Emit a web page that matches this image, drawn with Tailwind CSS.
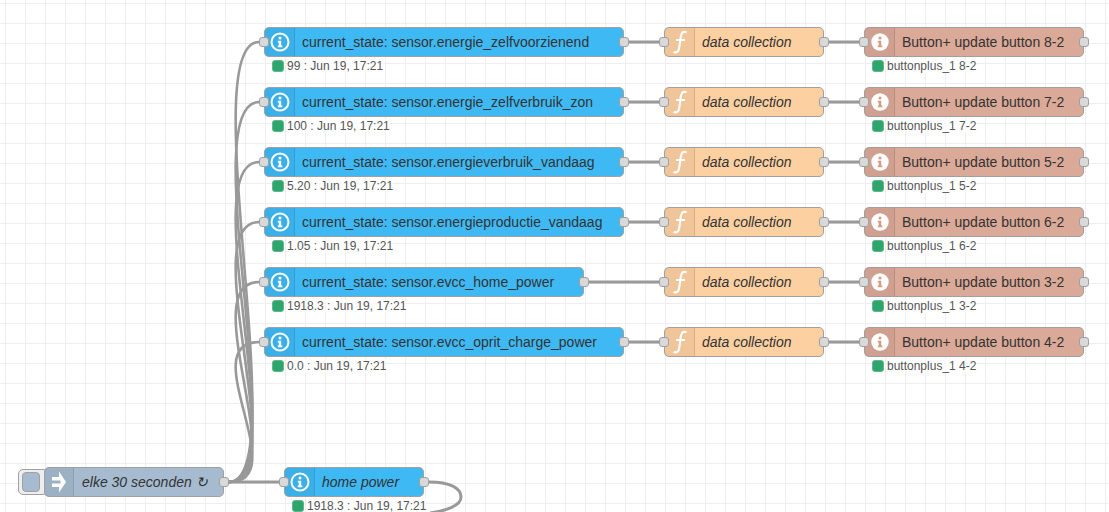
<!DOCTYPE html>
<html>
<head>
<meta charset="utf-8">
<script src="https://cdn.jsdelivr.net/npm/@tailwindcss/browser@4"></script>
</head>
<body class="m-0">
<div class="relative w-[1109px] h-[512px] overflow-hidden bg-white font-['Liberation_Sans',Arial,sans-serif] bg-[linear-gradient(#eeeeee_1px,transparent_1px),linear-gradient(90deg,#eeeeee_1px,transparent_1px)] bg-[size:20px_20px] bg-[position:5px_3px]">

<svg class="absolute inset-0" width="1109" height="512" fill="none" stroke="#999999" stroke-width="3">
  <g stroke-width="2.6">
  <path d="M229 482C295 482 193 42 259 42"/>
  <path d="M229 482C295 482 193 102 259 102"/>
  <path d="M229 482C295 482 193 162 259 162"/>
  <path d="M229 482C295 482 193 222 259 222"/>
  <path d="M229 482C295 482 193 282 259 282"/>
  <path d="M229 482C295 482 193 342 259 342"/>
  </g>
  <path d="M229 482L279 482"/>
  <path d="M429 482C450 482 461 488 461 497C461 506 445 511 430 513"/>
  <path d="M629 42H659M829 42H859M629 102H659M829 102H859M629 162H659M829 162H859M629 222H659M829 222H859M589 282H659M829 282H859M629 342H659M829 342H859"/>
</svg>

<!-- Row 1 -->
<div class="absolute left-[264px] top-[27px] w-[360px] h-[30px] flex items-center rounded-[5px] border border-[#a0a0a0] bg-[#3FB9F4] text-[14px] text-[#333]">
  <div class="w-[30px] h-full shrink-0 flex items-center justify-center bg-black/5 border-r border-black/10"><svg width="20" height="20" viewBox="0 0 20 20"><circle cx="10" cy="10" r="8.5" fill="none" stroke="#fff" stroke-width="2"/><circle cx="10" cy="6" r="1.5" fill="#fff"/><path d="M7.8 8.8h3.4v4.8h1.1v1.6H7.8v-1.6h1v-3.2h-1z" fill="#fff"/></svg></div>
  <span class="pl-[7px] whitespace-nowrap">current_state: sensor.energie_zelfvoorzienend</span>
</div>
<div class="absolute left-[259px] top-[37px] w-[10px] h-[10px] rounded-[3px] bg-[#d9d9d9] border border-[#a0a0a0]"></div>
<div class="absolute left-[619px] top-[37px] w-[10px] h-[10px] rounded-[3px] bg-[#d9d9d9] border border-[#a0a0a0]"></div>
<div class="absolute left-[272px] top-[59px] flex items-center gap-[3px] text-[12px] leading-[14px] text-[#555]"><span class="w-[12px] h-[12px] rounded-[3px] bg-[#2EA56C] border border-[#5cb98c]"></span><span class="bg-white/70 whitespace-nowrap">99 : Jun 19, 17:21</span></div>

<div class="absolute left-[664px] top-[27px] w-[160px] h-[30px] flex items-center rounded-[5px] border border-[#a0a0a0] bg-[#FDD0A2] text-[14px] text-[#333] italic">
  <div class="w-[30px] h-full shrink-0 flex items-center justify-center bg-black/5 border-r border-black/10"><svg width="16" height="26" viewBox="0 0 16 26"><path d="M14.5 3.5C11 1.5 9.3 4 8.8 7.5L7.2 19C6.7 22.5 4.5 24.5 1.5 22.8M4 11h9" fill="none" stroke="#fff" stroke-width="2.1"/></svg></div>
  <span class="pl-[7px] whitespace-nowrap">data collection</span>
</div>
<div class="absolute left-[659px] top-[37px] w-[10px] h-[10px] rounded-[3px] bg-[#d9d9d9] border border-[#a0a0a0]"></div>
<div class="absolute left-[819px] top-[37px] w-[10px] h-[10px] rounded-[3px] bg-[#d9d9d9] border border-[#a0a0a0]"></div>

<div class="absolute left-[864px] top-[27px] w-[220px] h-[30px] flex items-center rounded-[5px] border border-[#a0a0a0] bg-[#DBA997] text-[14px] text-[#333]">
  <div class="w-[30px] h-full shrink-0 flex items-center justify-center bg-black/5 border-r border-black/10"><svg width="20" height="20" viewBox="0 0 20 20"><circle cx="10" cy="10" r="8.7" fill="#fff"/><circle cx="10" cy="6" r="1.5" fill="#D59A84"/><path d="M7.8 8.8h3.4v4.8h1.1v1.6H7.8v-1.6h1v-3.2h-1z" fill="#D59A84"/></svg></div>
  <span class="pl-[7px] whitespace-nowrap">Button+ update button 8-2</span>
</div>
<div class="absolute left-[859px] top-[37px] w-[10px] h-[10px] rounded-[3px] bg-[#d9d9d9] border border-[#a0a0a0]"></div>
<div class="absolute left-[1079px] top-[37px] w-[10px] h-[10px] rounded-[3px] bg-[#d9d9d9] border border-[#a0a0a0]"></div>
<div class="absolute left-[872px] top-[59px] flex items-center gap-[3px] text-[12px] leading-[14px] text-[#555]"><span class="w-[12px] h-[12px] rounded-[3px] bg-[#2EA56C] border border-[#5cb98c]"></span><span class="bg-white/70 whitespace-nowrap">buttonplus_1 8-2</span></div>

<!-- Row 2 -->
<div class="absolute left-[264px] top-[87px] w-[360px] h-[30px] flex items-center rounded-[5px] border border-[#a0a0a0] bg-[#3FB9F4] text-[14px] text-[#333]">
  <div class="w-[30px] h-full shrink-0 flex items-center justify-center bg-black/5 border-r border-black/10"><svg width="20" height="20" viewBox="0 0 20 20"><circle cx="10" cy="10" r="8.5" fill="none" stroke="#fff" stroke-width="2"/><circle cx="10" cy="6" r="1.5" fill="#fff"/><path d="M7.8 8.8h3.4v4.8h1.1v1.6H7.8v-1.6h1v-3.2h-1z" fill="#fff"/></svg></div>
  <span class="pl-[7px] whitespace-nowrap">current_state: sensor.energie_zelfverbruik_zon</span>
</div>
<div class="absolute left-[259px] top-[97px] w-[10px] h-[10px] rounded-[3px] bg-[#d9d9d9] border border-[#a0a0a0]"></div>
<div class="absolute left-[619px] top-[97px] w-[10px] h-[10px] rounded-[3px] bg-[#d9d9d9] border border-[#a0a0a0]"></div>
<div class="absolute left-[272px] top-[119px] flex items-center gap-[3px] text-[12px] leading-[14px] text-[#555]"><span class="w-[12px] h-[12px] rounded-[3px] bg-[#2EA56C] border border-[#5cb98c]"></span><span class="bg-white/70 whitespace-nowrap">100 : Jun 19, 17:21</span></div>

<div class="absolute left-[664px] top-[87px] w-[160px] h-[30px] flex items-center rounded-[5px] border border-[#a0a0a0] bg-[#FDD0A2] text-[14px] text-[#333] italic">
  <div class="w-[30px] h-full shrink-0 flex items-center justify-center bg-black/5 border-r border-black/10"><svg width="16" height="26" viewBox="0 0 16 26"><path d="M14.5 3.5C11 1.5 9.3 4 8.8 7.5L7.2 19C6.7 22.5 4.5 24.5 1.5 22.8M4 11h9" fill="none" stroke="#fff" stroke-width="2.1"/></svg></div>
  <span class="pl-[7px] whitespace-nowrap">data collection</span>
</div>
<div class="absolute left-[659px] top-[97px] w-[10px] h-[10px] rounded-[3px] bg-[#d9d9d9] border border-[#a0a0a0]"></div>
<div class="absolute left-[819px] top-[97px] w-[10px] h-[10px] rounded-[3px] bg-[#d9d9d9] border border-[#a0a0a0]"></div>

<div class="absolute left-[864px] top-[87px] w-[220px] h-[30px] flex items-center rounded-[5px] border border-[#a0a0a0] bg-[#DBA997] text-[14px] text-[#333]">
  <div class="w-[30px] h-full shrink-0 flex items-center justify-center bg-black/5 border-r border-black/10"><svg width="20" height="20" viewBox="0 0 20 20"><circle cx="10" cy="10" r="8.7" fill="#fff"/><circle cx="10" cy="6" r="1.5" fill="#D59A84"/><path d="M7.8 8.8h3.4v4.8h1.1v1.6H7.8v-1.6h1v-3.2h-1z" fill="#D59A84"/></svg></div>
  <span class="pl-[7px] whitespace-nowrap">Button+ update button 7-2</span>
</div>
<div class="absolute left-[859px] top-[97px] w-[10px] h-[10px] rounded-[3px] bg-[#d9d9d9] border border-[#a0a0a0]"></div>
<div class="absolute left-[1079px] top-[97px] w-[10px] h-[10px] rounded-[3px] bg-[#d9d9d9] border border-[#a0a0a0]"></div>
<div class="absolute left-[872px] top-[119px] flex items-center gap-[3px] text-[12px] leading-[14px] text-[#555]"><span class="w-[12px] h-[12px] rounded-[3px] bg-[#2EA56C] border border-[#5cb98c]"></span><span class="bg-white/70 whitespace-nowrap">buttonplus_1 7-2</span></div>

<!-- Row 3 -->
<div class="absolute left-[264px] top-[147px] w-[360px] h-[30px] flex items-center rounded-[5px] border border-[#a0a0a0] bg-[#3FB9F4] text-[14px] text-[#333]">
  <div class="w-[30px] h-full shrink-0 flex items-center justify-center bg-black/5 border-r border-black/10"><svg width="20" height="20" viewBox="0 0 20 20"><circle cx="10" cy="10" r="8.5" fill="none" stroke="#fff" stroke-width="2"/><circle cx="10" cy="6" r="1.5" fill="#fff"/><path d="M7.8 8.8h3.4v4.8h1.1v1.6H7.8v-1.6h1v-3.2h-1z" fill="#fff"/></svg></div>
  <span class="pl-[7px] whitespace-nowrap">current_state: sensor.energieverbruik_vandaag</span>
</div>
<div class="absolute left-[259px] top-[157px] w-[10px] h-[10px] rounded-[3px] bg-[#d9d9d9] border border-[#a0a0a0]"></div>
<div class="absolute left-[619px] top-[157px] w-[10px] h-[10px] rounded-[3px] bg-[#d9d9d9] border border-[#a0a0a0]"></div>
<div class="absolute left-[272px] top-[179px] flex items-center gap-[3px] text-[12px] leading-[14px] text-[#555]"><span class="w-[12px] h-[12px] rounded-[3px] bg-[#2EA56C] border border-[#5cb98c]"></span><span class="bg-white/70 whitespace-nowrap">5.20 : Jun 19, 17:21</span></div>

<div class="absolute left-[664px] top-[147px] w-[160px] h-[30px] flex items-center rounded-[5px] border border-[#a0a0a0] bg-[#FDD0A2] text-[14px] text-[#333] italic">
  <div class="w-[30px] h-full shrink-0 flex items-center justify-center bg-black/5 border-r border-black/10"><svg width="16" height="26" viewBox="0 0 16 26"><path d="M14.5 3.5C11 1.5 9.3 4 8.8 7.5L7.2 19C6.7 22.5 4.5 24.5 1.5 22.8M4 11h9" fill="none" stroke="#fff" stroke-width="2.1"/></svg></div>
  <span class="pl-[7px] whitespace-nowrap">data collection</span>
</div>
<div class="absolute left-[659px] top-[157px] w-[10px] h-[10px] rounded-[3px] bg-[#d9d9d9] border border-[#a0a0a0]"></div>
<div class="absolute left-[819px] top-[157px] w-[10px] h-[10px] rounded-[3px] bg-[#d9d9d9] border border-[#a0a0a0]"></div>

<div class="absolute left-[864px] top-[147px] w-[220px] h-[30px] flex items-center rounded-[5px] border border-[#a0a0a0] bg-[#DBA997] text-[14px] text-[#333]">
  <div class="w-[30px] h-full shrink-0 flex items-center justify-center bg-black/5 border-r border-black/10"><svg width="20" height="20" viewBox="0 0 20 20"><circle cx="10" cy="10" r="8.7" fill="#fff"/><circle cx="10" cy="6" r="1.5" fill="#D59A84"/><path d="M7.8 8.8h3.4v4.8h1.1v1.6H7.8v-1.6h1v-3.2h-1z" fill="#D59A84"/></svg></div>
  <span class="pl-[7px] whitespace-nowrap">Button+ update button 5-2</span>
</div>
<div class="absolute left-[859px] top-[157px] w-[10px] h-[10px] rounded-[3px] bg-[#d9d9d9] border border-[#a0a0a0]"></div>
<div class="absolute left-[1079px] top-[157px] w-[10px] h-[10px] rounded-[3px] bg-[#d9d9d9] border border-[#a0a0a0]"></div>
<div class="absolute left-[872px] top-[179px] flex items-center gap-[3px] text-[12px] leading-[14px] text-[#555]"><span class="w-[12px] h-[12px] rounded-[3px] bg-[#2EA56C] border border-[#5cb98c]"></span><span class="bg-white/70 whitespace-nowrap">buttonplus_1 5-2</span></div>

<!-- Row 4 -->
<div class="absolute left-[264px] top-[207px] w-[360px] h-[30px] flex items-center rounded-[5px] border border-[#a0a0a0] bg-[#3FB9F4] text-[14px] text-[#333]">
  <div class="w-[30px] h-full shrink-0 flex items-center justify-center bg-black/5 border-r border-black/10"><svg width="20" height="20" viewBox="0 0 20 20"><circle cx="10" cy="10" r="8.5" fill="none" stroke="#fff" stroke-width="2"/><circle cx="10" cy="6" r="1.5" fill="#fff"/><path d="M7.8 8.8h3.4v4.8h1.1v1.6H7.8v-1.6h1v-3.2h-1z" fill="#fff"/></svg></div>
  <span class="pl-[7px] whitespace-nowrap">current_state: sensor.energieproductie_vandaag</span>
</div>
<div class="absolute left-[259px] top-[217px] w-[10px] h-[10px] rounded-[3px] bg-[#d9d9d9] border border-[#a0a0a0]"></div>
<div class="absolute left-[619px] top-[217px] w-[10px] h-[10px] rounded-[3px] bg-[#d9d9d9] border border-[#a0a0a0]"></div>
<div class="absolute left-[272px] top-[239px] flex items-center gap-[3px] text-[12px] leading-[14px] text-[#555]"><span class="w-[12px] h-[12px] rounded-[3px] bg-[#2EA56C] border border-[#5cb98c]"></span><span class="bg-white/70 whitespace-nowrap">1.05 : Jun 19, 17:21</span></div>

<div class="absolute left-[664px] top-[207px] w-[160px] h-[30px] flex items-center rounded-[5px] border border-[#a0a0a0] bg-[#FDD0A2] text-[14px] text-[#333] italic">
  <div class="w-[30px] h-full shrink-0 flex items-center justify-center bg-black/5 border-r border-black/10"><svg width="16" height="26" viewBox="0 0 16 26"><path d="M14.5 3.5C11 1.5 9.3 4 8.8 7.5L7.2 19C6.7 22.5 4.5 24.5 1.5 22.8M4 11h9" fill="none" stroke="#fff" stroke-width="2.1"/></svg></div>
  <span class="pl-[7px] whitespace-nowrap">data collection</span>
</div>
<div class="absolute left-[659px] top-[217px] w-[10px] h-[10px] rounded-[3px] bg-[#d9d9d9] border border-[#a0a0a0]"></div>
<div class="absolute left-[819px] top-[217px] w-[10px] h-[10px] rounded-[3px] bg-[#d9d9d9] border border-[#a0a0a0]"></div>

<div class="absolute left-[864px] top-[207px] w-[220px] h-[30px] flex items-center rounded-[5px] border border-[#a0a0a0] bg-[#DBA997] text-[14px] text-[#333]">
  <div class="w-[30px] h-full shrink-0 flex items-center justify-center bg-black/5 border-r border-black/10"><svg width="20" height="20" viewBox="0 0 20 20"><circle cx="10" cy="10" r="8.7" fill="#fff"/><circle cx="10" cy="6" r="1.5" fill="#D59A84"/><path d="M7.8 8.8h3.4v4.8h1.1v1.6H7.8v-1.6h1v-3.2h-1z" fill="#D59A84"/></svg></div>
  <span class="pl-[7px] whitespace-nowrap">Button+ update button 6-2</span>
</div>
<div class="absolute left-[859px] top-[217px] w-[10px] h-[10px] rounded-[3px] bg-[#d9d9d9] border border-[#a0a0a0]"></div>
<div class="absolute left-[1079px] top-[217px] w-[10px] h-[10px] rounded-[3px] bg-[#d9d9d9] border border-[#a0a0a0]"></div>
<div class="absolute left-[872px] top-[239px] flex items-center gap-[3px] text-[12px] leading-[14px] text-[#555]"><span class="w-[12px] h-[12px] rounded-[3px] bg-[#2EA56C] border border-[#5cb98c]"></span><span class="bg-white/70 whitespace-nowrap">buttonplus_1 6-2</span></div>

<!-- Row 5 -->
<div class="absolute left-[264px] top-[267px] w-[320px] h-[30px] flex items-center rounded-[5px] border border-[#a0a0a0] bg-[#3FB9F4] text-[14px] text-[#333]">
  <div class="w-[30px] h-full shrink-0 flex items-center justify-center bg-black/5 border-r border-black/10"><svg width="20" height="20" viewBox="0 0 20 20"><circle cx="10" cy="10" r="8.5" fill="none" stroke="#fff" stroke-width="2"/><circle cx="10" cy="6" r="1.5" fill="#fff"/><path d="M7.8 8.8h3.4v4.8h1.1v1.6H7.8v-1.6h1v-3.2h-1z" fill="#fff"/></svg></div>
  <span class="pl-[7px] whitespace-nowrap">current_state: sensor.evcc_home_power</span>
</div>
<div class="absolute left-[259px] top-[277px] w-[10px] h-[10px] rounded-[3px] bg-[#d9d9d9] border border-[#a0a0a0]"></div>
<div class="absolute left-[579px] top-[277px] w-[10px] h-[10px] rounded-[3px] bg-[#d9d9d9] border border-[#a0a0a0]"></div>
<div class="absolute left-[272px] top-[299px] flex items-center gap-[3px] text-[12px] leading-[14px] text-[#555]"><span class="w-[12px] h-[12px] rounded-[3px] bg-[#2EA56C] border border-[#5cb98c]"></span><span class="bg-white/70 whitespace-nowrap">1918.3 : Jun 19, 17:21</span></div>

<div class="absolute left-[664px] top-[267px] w-[160px] h-[30px] flex items-center rounded-[5px] border border-[#a0a0a0] bg-[#FDD0A2] text-[14px] text-[#333] italic">
  <div class="w-[30px] h-full shrink-0 flex items-center justify-center bg-black/5 border-r border-black/10"><svg width="16" height="26" viewBox="0 0 16 26"><path d="M14.5 3.5C11 1.5 9.3 4 8.8 7.5L7.2 19C6.7 22.5 4.5 24.5 1.5 22.8M4 11h9" fill="none" stroke="#fff" stroke-width="2.1"/></svg></div>
  <span class="pl-[7px] whitespace-nowrap">data collection</span>
</div>
<div class="absolute left-[659px] top-[277px] w-[10px] h-[10px] rounded-[3px] bg-[#d9d9d9] border border-[#a0a0a0]"></div>
<div class="absolute left-[819px] top-[277px] w-[10px] h-[10px] rounded-[3px] bg-[#d9d9d9] border border-[#a0a0a0]"></div>

<div class="absolute left-[864px] top-[267px] w-[220px] h-[30px] flex items-center rounded-[5px] border border-[#a0a0a0] bg-[#DBA997] text-[14px] text-[#333]">
  <div class="w-[30px] h-full shrink-0 flex items-center justify-center bg-black/5 border-r border-black/10"><svg width="20" height="20" viewBox="0 0 20 20"><circle cx="10" cy="10" r="8.7" fill="#fff"/><circle cx="10" cy="6" r="1.5" fill="#D59A84"/><path d="M7.8 8.8h3.4v4.8h1.1v1.6H7.8v-1.6h1v-3.2h-1z" fill="#D59A84"/></svg></div>
  <span class="pl-[7px] whitespace-nowrap">Button+ update button 3-2</span>
</div>
<div class="absolute left-[859px] top-[277px] w-[10px] h-[10px] rounded-[3px] bg-[#d9d9d9] border border-[#a0a0a0]"></div>
<div class="absolute left-[1079px] top-[277px] w-[10px] h-[10px] rounded-[3px] bg-[#d9d9d9] border border-[#a0a0a0]"></div>
<div class="absolute left-[872px] top-[299px] flex items-center gap-[3px] text-[12px] leading-[14px] text-[#555]"><span class="w-[12px] h-[12px] rounded-[3px] bg-[#2EA56C] border border-[#5cb98c]"></span><span class="bg-white/70 whitespace-nowrap">buttonplus_1 3-2</span></div>

<!-- Row 6 -->
<div class="absolute left-[264px] top-[327px] w-[360px] h-[30px] flex items-center rounded-[5px] border border-[#a0a0a0] bg-[#3FB9F4] text-[14px] text-[#333]">
  <div class="w-[30px] h-full shrink-0 flex items-center justify-center bg-black/5 border-r border-black/10"><svg width="20" height="20" viewBox="0 0 20 20"><circle cx="10" cy="10" r="8.5" fill="none" stroke="#fff" stroke-width="2"/><circle cx="10" cy="6" r="1.5" fill="#fff"/><path d="M7.8 8.8h3.4v4.8h1.1v1.6H7.8v-1.6h1v-3.2h-1z" fill="#fff"/></svg></div>
  <span class="pl-[7px] whitespace-nowrap">current_state: sensor.evcc_oprit_charge_power</span>
</div>
<div class="absolute left-[259px] top-[337px] w-[10px] h-[10px] rounded-[3px] bg-[#d9d9d9] border border-[#a0a0a0]"></div>
<div class="absolute left-[619px] top-[337px] w-[10px] h-[10px] rounded-[3px] bg-[#d9d9d9] border border-[#a0a0a0]"></div>
<div class="absolute left-[272px] top-[359px] flex items-center gap-[3px] text-[12px] leading-[14px] text-[#555]"><span class="w-[12px] h-[12px] rounded-[3px] bg-[#2EA56C] border border-[#5cb98c]"></span><span class="bg-white/70 whitespace-nowrap">0.0 : Jun 19, 17:21</span></div>

<div class="absolute left-[664px] top-[327px] w-[160px] h-[30px] flex items-center rounded-[5px] border border-[#a0a0a0] bg-[#FDD0A2] text-[14px] text-[#333] italic">
  <div class="w-[30px] h-full shrink-0 flex items-center justify-center bg-black/5 border-r border-black/10"><svg width="16" height="26" viewBox="0 0 16 26"><path d="M14.5 3.5C11 1.5 9.3 4 8.8 7.5L7.2 19C6.7 22.5 4.5 24.5 1.5 22.8M4 11h9" fill="none" stroke="#fff" stroke-width="2.1"/></svg></div>
  <span class="pl-[7px] whitespace-nowrap">data collection</span>
</div>
<div class="absolute left-[659px] top-[337px] w-[10px] h-[10px] rounded-[3px] bg-[#d9d9d9] border border-[#a0a0a0]"></div>
<div class="absolute left-[819px] top-[337px] w-[10px] h-[10px] rounded-[3px] bg-[#d9d9d9] border border-[#a0a0a0]"></div>

<div class="absolute left-[864px] top-[327px] w-[220px] h-[30px] flex items-center rounded-[5px] border border-[#a0a0a0] bg-[#DBA997] text-[14px] text-[#333]">
  <div class="w-[30px] h-full shrink-0 flex items-center justify-center bg-black/5 border-r border-black/10"><svg width="20" height="20" viewBox="0 0 20 20"><circle cx="10" cy="10" r="8.7" fill="#fff"/><circle cx="10" cy="6" r="1.5" fill="#D59A84"/><path d="M7.8 8.8h3.4v4.8h1.1v1.6H7.8v-1.6h1v-3.2h-1z" fill="#D59A84"/></svg></div>
  <span class="pl-[7px] whitespace-nowrap">Button+ update button 4-2</span>
</div>
<div class="absolute left-[859px] top-[337px] w-[10px] h-[10px] rounded-[3px] bg-[#d9d9d9] border border-[#a0a0a0]"></div>
<div class="absolute left-[1079px] top-[337px] w-[10px] h-[10px] rounded-[3px] bg-[#d9d9d9] border border-[#a0a0a0]"></div>
<div class="absolute left-[872px] top-[359px] flex items-center gap-[3px] text-[12px] leading-[14px] text-[#555]"><span class="w-[12px] h-[12px] rounded-[3px] bg-[#2EA56C] border border-[#5cb98c]"></span><span class="bg-white/70 whitespace-nowrap">buttonplus_1 4-2</span></div>

<!-- Inject -->
<div class="absolute left-[18px] top-[469px] w-[30px] h-[26px] rounded-[5px] border border-[#a0a0a0] bg-[#eeeeee] pl-[3px] pt-[2px]"><div class="w-[18px] h-[20px] rounded-[4px] border border-[#a0a0a0] bg-[#A6BBCF]"></div></div>
<div class="absolute left-[44px] top-[467px] w-[180px] h-[30px] flex items-center rounded-[5px] border border-[#a0a0a0] bg-[#A6BBCF] text-[14px] text-[#333] italic">
  <div class="w-[29px] h-full shrink-0 flex items-center justify-center bg-black/5 border-r border-black/10"><svg width="14" height="24" viewBox="0 0 14 24"><path d="M0 7h7V1.5L14 12 7 22.5V17H0v-3.4h8.5v-3.2H0z" fill="#fff"/></svg></div>
  <span class="pl-[8px] whitespace-nowrap">elke 30 seconden <span class="font-['Noto_Sans_CJK_SC',sans-serif]">↻</span></span>
</div>
<div class="absolute left-[219px] top-[477px] w-[10px] h-[10px] rounded-[3px] bg-[#d9d9d9] border border-[#a0a0a0]"></div>

<!-- Home power -->
<div class="absolute left-[284px] top-[467px] w-[140px] h-[30px] flex items-center rounded-[5px] border border-[#a0a0a0] bg-[#3FB9F4] text-[14px] text-[#333] italic">
  <div class="w-[30px] h-full shrink-0 flex items-center justify-center bg-black/5 border-r border-black/10"><svg width="20" height="20" viewBox="0 0 20 20"><circle cx="10" cy="10" r="8.5" fill="none" stroke="#fff" stroke-width="2"/><circle cx="10" cy="6" r="1.5" fill="#fff"/><path d="M7.8 8.8h3.4v4.8h1.1v1.6H7.8v-1.6h1v-3.2h-1z" fill="#fff"/></svg></div>
  <span class="pl-[7px] whitespace-nowrap">home power</span>
</div>
<div class="absolute left-[279px] top-[477px] w-[10px] h-[10px] rounded-[3px] bg-[#d9d9d9] border border-[#a0a0a0]"></div>
<div class="absolute left-[419px] top-[477px] w-[10px] h-[10px] rounded-[3px] bg-[#d9d9d9] border border-[#a0a0a0]"></div>
<div class="absolute left-[292px] top-[499px] flex items-center gap-[3px] text-[12px] leading-[14px] text-[#555]"><span class="w-[12px] h-[12px] rounded-[3px] bg-[#2EA56C] border border-[#5cb98c]"></span><span class="bg-white/70 whitespace-nowrap">1918.3 : Jun 19, 17:21</span></div>

</div>
</body>
</html>
